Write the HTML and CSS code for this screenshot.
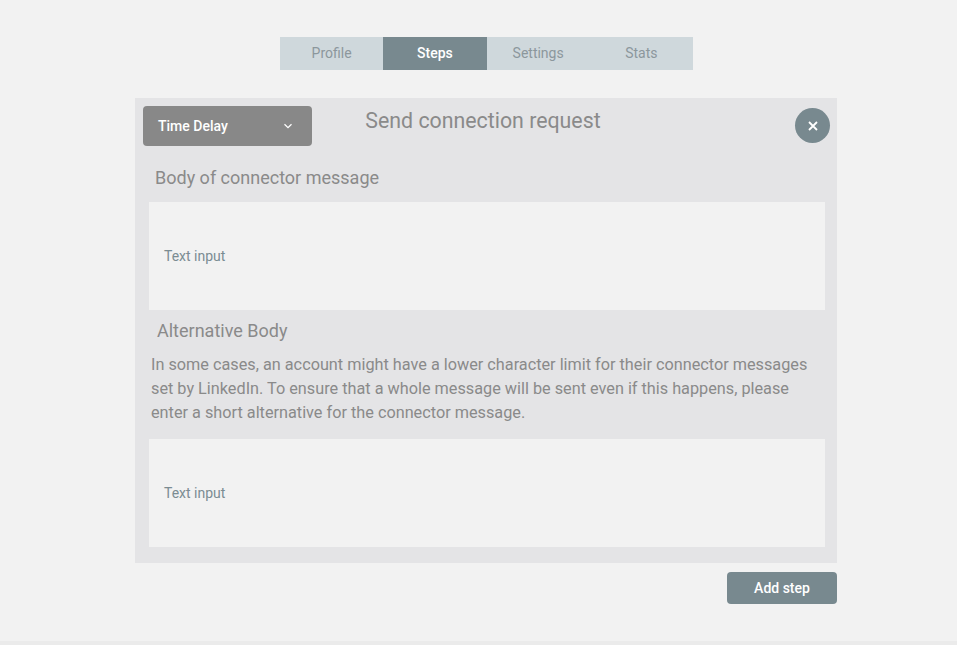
FILE: index.html
```html
<!DOCTYPE html>
<html>
<head>
<meta charset="utf-8">
<link rel="stylesheet" href="styles.css">
</head>
<body>
<div class="page">
  <div class="wrap">
    <nav class="tabs">
      <div class="tab">Profile</div>
      <div class="tab active">Steps</div>
      <div class="tab">Settings</div>
      <div class="tab">Stats</div>
    </nav>
    <section class="card">
      <div class="header">
        <div class="left">
          <div class="select">
            <span>Time Delay</span>
            <svg class="chev" width="10" height="6" viewBox="0 0 10 6"><path d="M1.5 1.2 L5 4.6 L8.5 1.2" fill="none" stroke="#fff" stroke-width="1.3"/></svg>
          </div>
        </div>
        <h1 class="title">Send connection request</h1>
        <div class="right">
          <div class="close">
            <svg width="10" height="10" viewBox="0 0 10 10"><path d="M1 1 L9 9 M9 1 L1 9" stroke="#fff" stroke-width="1.8"/></svg>
          </div>
        </div>
      </div>
      <h2 class="label first">Body of connector message</h2>
      <div class="input"><span>Text input</span></div>
      <h2 class="label second">Alternative Body</h2>
      <p class="desc">In some cases, an account might have a lower character limit for their connector messages set by LinkedIn. To ensure that a whole message will be sent even if this happens, please enter a short alternative for the connector message.</p>
      <div class="input"><span>Text input</span></div>
    </section>
    <div class="actions">
      <button class="add">Add step</button>
    </div>
  </div>
</div>
</body>
</html>
```

FILE: styles.css
```css
* { box-sizing: border-box; }
html, body { margin: 0; padding: 0; }
body {
  background: #ebebeb;
  font-family: Roboto, "Noto Sans", sans-serif;
  height: 645px;
  overflow: hidden;
}
.page {
  background: #f2f2f2;
  height: 641px;
  padding-top: 37px;
}
.wrap {
  width: 702px;
  margin-left: 135px;
}
.tabs {
  display: flex;
  justify-content: center;
  padding-left: 1px;
}
.tab {
  width: 103.25px;
  height: 33px;
  background: #cfd8dc;
  color: #8c979c;
  font-size: 14px;
  display: flex;
  align-items: center;
  justify-content: center;
  padding-bottom: 1px;
}
.tab.active {
  background: #78898f;
  color: #fff;
  font-weight: 500;
}
.card {
  margin-top: 28px;
  background: #e4e4e6;
  padding: 8px 12px 16px 14px;
}
.header {
  display: grid;
  grid-template-columns: 1fr auto 1fr;
  align-items: start;
}
.left { margin-left: -6px; }
.select {
  width: 169px;
  height: 40px;
  background: #888888;
  border-radius: 4px;
  color: #fff;
  font-size: 14px;
  font-weight: 500;
  display: flex;
  align-items: center;
  justify-content: space-between;
  padding: 0 19px 0 15px;
}
.chev { display: block; }
.title {
  margin: 0;
  padding-top: 1px;
  font-size: 21.33px;
  font-weight: 400;
  color: #8a8a8a;
  line-height: 28px;
  margin-right: 8px;
}
.right { display: flex; justify-content: flex-end; }
.close {
  width: 35px;
  height: 35px;
  border-radius: 50%;
  background: #78898f;
  display: flex;
  align-items: center;
  justify-content: center;
  margin-top: 2px;
  margin-right: -5px;
}
.label {
  margin: 0;
  font-size: 18px;
  font-weight: 400;
  color: #8a8a8a;
  line-height: 24px;
}
.label.first { margin-top: 20px; padding-left: 6px; }
.label.second { margin-top: 9px; padding-left: 8px; }
.input {
  margin-top: 12px;
  height: 108px;
  background: #f2f2f2;
  display: flex;
  align-items: center;
  padding-left: 15px;
  font-size: 14px;
  color: #7b8c92;
}
.desc {
  margin: 10px 0 0 2px;
  font-size: 16.25px;
  line-height: 24px;
  color: #8a8a8a;
}
.desc + .input { margin-top: 14px; }
.actions {
  display: flex;
  justify-content: flex-end;
  margin-top: 9px;
}
.add {
  width: 110px;
  height: 32px;
  border: 0;
  border-radius: 4px;
  background: #78898f;
  color: #fff;
  font-family: Roboto, "Noto Sans", sans-serif;
  font-size: 14px;
  font-weight: 500;
}
```
